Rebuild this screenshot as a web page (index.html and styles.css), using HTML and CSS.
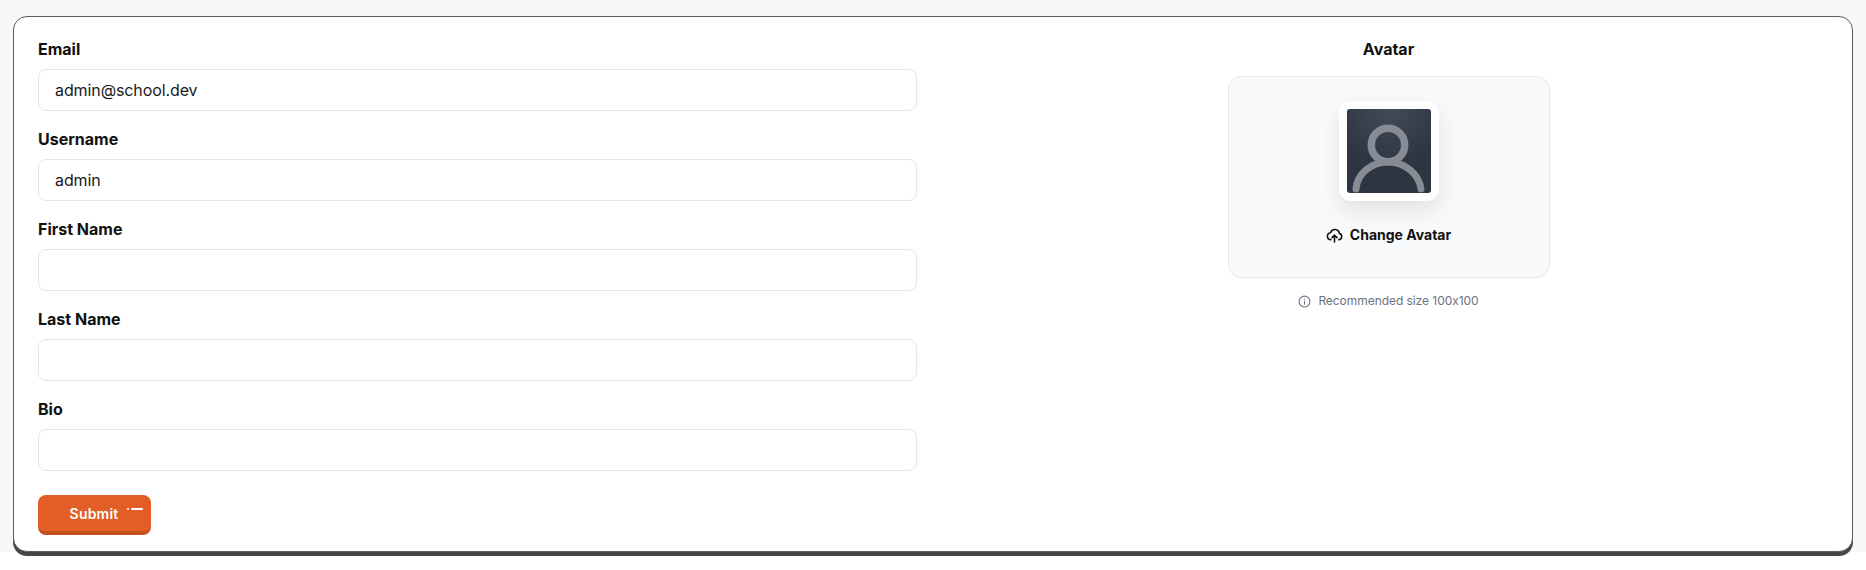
FILE: index.html
```html
<!DOCTYPE html>
<html lang="en">
<head>
<meta charset="utf-8">
<title>Profile</title>
<link rel="stylesheet" href="styles.css">
</head>
<body>
<main class="page">
  <section class="card">
    <form class="form">
      <div class="field"><label class="label">Email</label><input class="input" value="admin@school.dev"></div>
      <div class="field"><label class="label">Username</label><input class="input" value="admin"></div>
      <div class="field"><label class="label">First Name</label><input class="input"></div>
      <div class="field"><label class="label">Last Name</label><input class="input"></div>
      <div class="field"><label class="label">Bio</label><input class="input"></div>
      <button type="button" class="submit"><span>Submit</span><i class="glint"></i></button>
    </form>
    <aside class="side">
      <div class="side-title">Avatar</div>
      <div class="avatar-box">
        <div class="frame">
          <svg class="avatar" viewBox="0 0 84 84">
            <defs><radialGradient id="g" cx="50%" cy="0%" r="70%"><stop offset="0" stop-color="#434a58"/><stop offset="1" stop-color="#2d3442"/></radialGradient></defs>
            <rect width="84" height="84" rx="3" fill="url(#g)"/>
            <circle cx="41" cy="36" r="16.700" fill="none" stroke="#868b94" stroke-width="7.500"/>
            <path d="M9 80C10 65 24 53 41 53S72 65 74 80" fill="none" stroke="#868b94" stroke-width="7" stroke-linecap="round"/>
          </svg>
        </div>
        <div class="change">
          <svg class="ico-up" viewBox="0 0 24 24" fill="none" stroke="#111" stroke-width="2.200" stroke-linecap="round" stroke-linejoin="round"><path d="M7 18a5 5 0 0 1-.6-9.960A6.500 6.500 0 0 1 19 9.200a4.500 4.500 0 0 1-1 8.800"/><path d="M12 21v-9M8.500 15l3.500-3.500 3.500 3.500"/></svg>
          <span>Change Avatar</span>
        </div>
      </div>
      <div class="hint">
        <svg class="ico-info" viewBox="0 0 24 24" fill="none" stroke="#6b7280" stroke-width="2" stroke-linecap="round"><circle cx="12" cy="12" r="10"/><path d="M12 11v6M12 7.500v.01"/></svg>
        <span>Recommended size 100x100</span>
      </div>
    </aside>
  </section>
</main>
</body>
</html>
```
FILE: styles.css
```css
* { box-sizing: border-box; }
html, body { margin: 0; background: #fff; }
body { min-height: 570px; font-family: Inter, "Liberation Sans", sans-serif; font-feature-settings: "calt" 0; color: #111; }
.page { height: 552px; background: #f7f7f7; padding: 16px 13px 0; }
.card {
  height: 536px;
  background: #fff;
  border: 1px solid #5c5c5c;
  border-radius: 14px;
  box-shadow: 0 4px 0 #454545;
  padding: 22px 24px 0;
  display: flex;
}
.form { width: 879px; flex: none; display: flex; flex-direction: column; }
.field { height: 90px; flex: none; display: flex; flex-direction: column; }
.label { font-size: 16px; font-weight: 650; line-height: 20px; margin-bottom: 10px; color: #111; }
.input {
  height: 42px;
  flex: none;
  border: 1px solid #e5e5e5;
  border-radius: 8px;
  padding: 0 16px;
  font: 400 16px Inter, sans-serif;
  letter-spacing: -0.1px;
  color: #1a1a1a;
  background: #fff;
  outline: none;
}
.submit {
  position: relative;
  flex: none;
  width: 113px;
  height: 40px;
  margin-top: 6px;
  background: #e35d27;
  border: 0;
  border-bottom: 4px solid #c64f1f;
  border-radius: 8px;
  color: #fff;
  font: 600 14px Inter, sans-serif;
  letter-spacing: 0.2px;
  padding: 0 1px 0 0;
  text-align: center;
}
.glint { position: absolute; left: 93px; top: 13px; width: 12px; height: 2px; background: #fff; border-radius: 1px; }
.glint::before { content: ""; position: absolute; left: -4px; top: 0; width: 2px; height: 2px; background: #fff; border-radius: 50%; }
.side { flex: 1; padding-left: 32px; display: flex; flex-direction: column; align-items: center; }
.side-title { font-size: 16px; font-weight: 650; line-height: 20px; margin-bottom: 17px; }
.avatar-box {
  width: 322px;
  height: 202px;
  flex: none;
  background: #f9fafb;
  border: 1px solid #e5e7eb;
  border-radius: 14px;
  display: flex;
  flex-direction: column;
  align-items: center;
  padding-top: 24px;
}
.frame { width: 100px; height: 100px; flex: none; padding: 8px; background: #fff; border-radius: 12px; box-shadow: 0 10px 25px rgba(0,0,0,.1); }
.avatar { display: block; width: 84px; height: 84px; }
.change { display: flex; align-items: center; gap: 7px; margin-top: 24px; font-size: 14px; font-weight: 650; line-height: 20px; }
.ico-up { width: 17px; height: 17px; }
.hint { display: flex; align-items: center; gap: 7px; margin-top: 14px; font-size: 12px; letter-spacing: -0.05px; line-height: 18px; color: #6b7280; }
.ico-info { width: 13px; height: 13px; }
```
